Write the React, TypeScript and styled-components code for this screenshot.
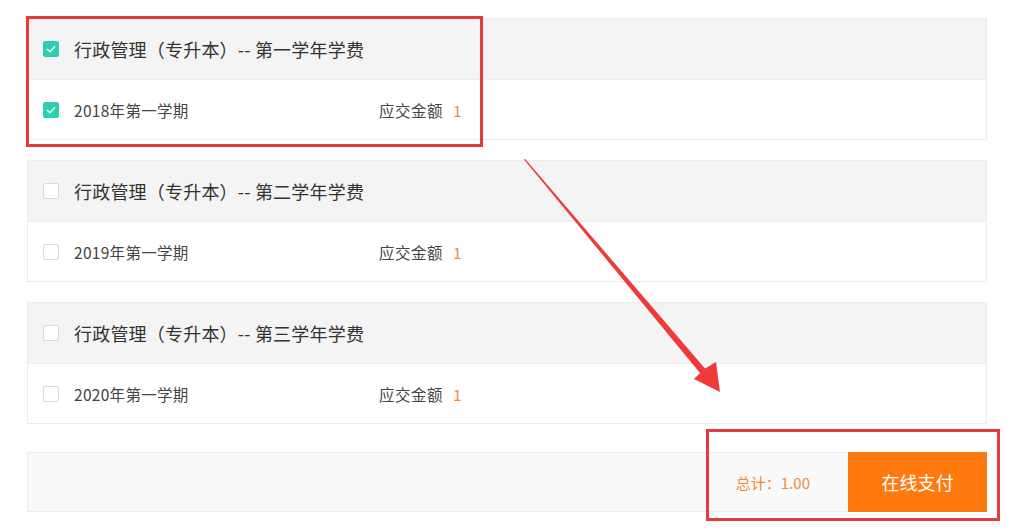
import React from "react"
import styled, { createGlobalStyle } from "styled-components"

const GlobalStyle = createGlobalStyle`
  body {
    margin: 0;
    background: #fff;
    font-family: "Noto Sans CJK SC", "Noto Sans", sans-serif;
    color: #333;
  }
`

interface Term {
  name: string
  amount: string
  checked: boolean
}

interface FeeGroup {
  title: string
  checked: boolean
  terms: Term[]
}

const groups: FeeGroup[] = [
  { title: "行政管理（专升本）-- 第一学年学费", checked: true, terms: [{ name: "2018年第一学期", amount: "1", checked: true }] },
  { title: "行政管理（专升本）-- 第二学年学费", checked: false, terms: [{ name: "2019年第一学期", amount: "1", checked: false }] },
  { title: "行政管理（专升本）-- 第三学年学费", checked: false, terms: [{ name: "2020年第一学期", amount: "1", checked: false }] },
]

const Page = styled.div`
  position: relative;
  width: 1016px;
  height: 532px;
  padding: 18px 0 0 27px;
  box-sizing: border-box;
  overflow: hidden;
`

const List = styled.div`
  width: 960px;
  display: flex;
  flex-direction: column;
  gap: 20px;
`

const Card = styled.div`
  border: 1px solid #ececec;
  background: #fff;
`

const GroupHeader = styled.div`
  height: 60px;
  display: flex;
  align-items: center;
  padding-left: 15px;
  background: #f4f4f4;
  border-bottom: 1px solid #ededed;
  font-size: 18px;
  color: #333;
`

const Title = styled.span`
  letter-spacing: 0.2px;
`

const TermRow = styled.div`
  height: 59px;
  display: flex;
  align-items: center;
  padding-left: 15px;
  font-size: 15.5px;
  color: #444;
`

const Check = styled.span<{ $checked: boolean }>`
  width: 16px;
  height: 16px;
  box-sizing: border-box;
  border-radius: 2px;
  margin-right: 15px;
  flex-shrink: 0;
  display: inline-flex;
  align-items: center;
  justify-content: center;
  background: ${p => (p.$checked ? "#2ccfb1" : "#fff")};
  border: 1px solid ${p => (p.$checked ? "#2ccfb1" : "#d9d9d9")};
`

const TermName = styled.span`
  width: 305px;
  letter-spacing: 0.3px;
`

const AmountLabel = styled.span`
  color: #444;
  letter-spacing: 0.5px;
`

const Amount = styled.span`
  margin-left: 10px;
  color: #f5873a;
`

const Footer = styled.div`
  margin-top: 28px;
  width: 960px;
  height: 60px;
  box-sizing: border-box;
  border: 1px solid #ececec;
  background: #f9f9f9;
  display: flex;
  justify-content: flex-end;
  align-items: center;
`

const Total = styled.span`
  font-size: 15px;
  color: #f5873a;
  margin-right: 38px;
`

const PayButton = styled.button`
  width: 139px;
  height: 60px;
  margin: -1px -1px -1px 0;
  border: none;
  background: #ff790f;
  color: #fff;
  font-size: 18px;
  font-family: "Noto Sans CJK SC", sans-serif;
  cursor: pointer;
`

const Highlight = styled.div<{ $x: number; $y: number; $w: number; $h: number }>`
  position: absolute;
  left: ${p => p.$x}px;
  top: ${p => p.$y}px;
  width: ${p => p.$w}px;
  height: ${p => p.$h}px;
  box-sizing: border-box;
  border: 3px solid #e8393e;
  pointer-events: none;
`

const ArrowLayer = styled.svg`
  position: absolute;
  left: 0;
  top: 0;
  pointer-events: none;
`

const Tick = () => (
  <svg width="10" height="8" viewBox="0 0 10 8">
    <path d="M1 4 L4 6.8 L9 1.2" fill="none" stroke="#fff" strokeWidth="1.4" />
  </svg>
)

export default function App() {
  return (
    <Page>
      <GlobalStyle />
      <List>
        {groups.map(g => (
          <Card key={g.title}>
            <GroupHeader>
              <Check $checked={g.checked}>{g.checked && <Tick />}</Check>
              <Title>{g.title}</Title>
            </GroupHeader>
            {g.terms.map(t => (
              <TermRow key={t.name}>
                <Check $checked={t.checked}>{t.checked && <Tick />}</Check>
                <TermName>{t.name}</TermName>
                <AmountLabel>应交金额</AmountLabel>
                <Amount>{t.amount}</Amount>
              </TermRow>
            ))}
          </Card>
        ))}
      </List>
      <Footer>
        <Total>总计：1.00</Total>
        <PayButton>在线支付</PayButton>
      </Footer>

      <Highlight $x={26} $y={16} $w={457} $h={131} />
      <Highlight $x={706} $y={429} $w={294} $h={92} />
      <ArrowLayer width="1016" height="532">
        <polygon
          points="524,159.5 525.2,159 705,368.5 716,362 720,392 694,379 700,373"
          fill="#f03a3a"
        />
      </ArrowLayer>
    </Page>
  )
}
